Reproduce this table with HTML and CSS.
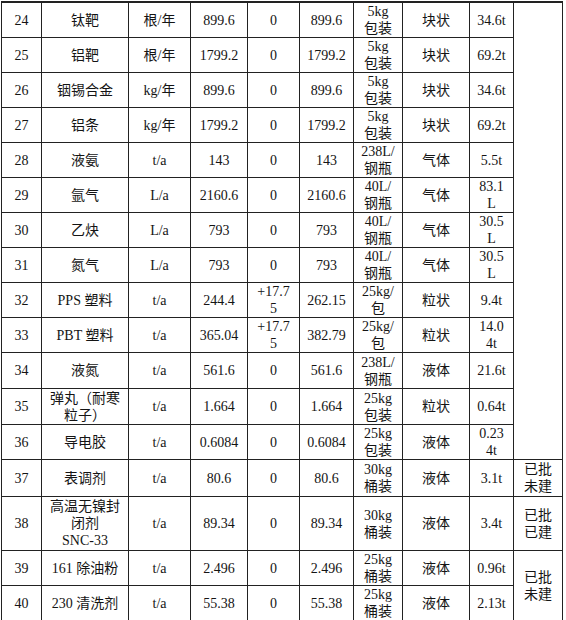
FILE: index.html
```html
<!DOCTYPE html>
<html lang="zh-CN">
<head>
<meta charset="utf-8">
<title>原辅材料表</title>
<link rel="stylesheet" href="styles.css">
</head>
<body>
<table class="mat">
  <colgroup>
    <col class="c-no"><col class="c-name"><col class="c-unit"><col class="c-v1"><col class="c-chg"><col class="c-v2"><col class="c-pack"><col class="c-form"><col class="c-max"><col class="c-note">
  </colgroup>
  <tbody>
    <tr class="h35"><td>24</td><td>钛靶</td><td>根/年</td><td>899.6</td><td>0</td><td>899.6</td><td>5kg<br>包装</td><td>块状</td><td>34.6t</td><td rowspan="13"></td></tr>
    <tr class="h35"><td>25</td><td>铝靶</td><td>根/年</td><td>1799.2</td><td>0</td><td>1799.2</td><td>5kg<br>包装</td><td>块状</td><td>69.2t</td></tr>
    <tr class="h35"><td>26</td><td>铟锡合金</td><td>kg/年</td><td>899.6</td><td>0</td><td>899.6</td><td>5kg<br>包装</td><td>块状</td><td>34.6t</td></tr>
    <tr class="h35"><td>27</td><td>铝条</td><td>kg/年</td><td>1799.2</td><td>0</td><td>1799.2</td><td>5kg<br>包装</td><td>块状</td><td>69.2t</td></tr>
    <tr class="h35"><td>28</td><td>液氨</td><td>t/a</td><td>143</td><td>0</td><td>143</td><td>238L/<br>钢瓶</td><td>气体</td><td>5.5t</td></tr>
    <tr class="h35"><td>29</td><td>氩气</td><td>L/a</td><td>2160.6</td><td>0</td><td>2160.6</td><td>40L/<br>钢瓶</td><td>气体</td><td>83.1<br>L</td></tr>
    <tr class="h35"><td>30</td><td>乙炔</td><td>L/a</td><td>793</td><td>0</td><td>793</td><td>40L/<br>钢瓶</td><td>气体</td><td>30.5<br>L</td></tr>
    <tr class="h35"><td>31</td><td>氮气</td><td>L/a</td><td>793</td><td>0</td><td>793</td><td>40L/<br>钢瓶</td><td>气体</td><td>30.5<br>L</td></tr>
    <tr class="h34"><td>32</td><td>PPS 塑料</td><td>t/a</td><td>244.4</td><td>+17.7<br>5</td><td>262.15</td><td>25kg/<br>包</td><td>粒状</td><td>9.4t</td></tr>
    <tr class="h35"><td>33</td><td>PBT 塑料</td><td>t/a</td><td>365.04</td><td>+17.7<br>5</td><td>382.79</td><td>25kg/<br>包</td><td>粒状</td><td>14.0<br>4t</td></tr>
    <tr class="h36"><td>34</td><td>液氮</td><td>t/a</td><td>561.6</td><td>0</td><td>561.6</td><td>238L/<br>钢瓶</td><td>液体</td><td>21.6t</td></tr>
    <tr class="h36"><td>35</td><td>弹丸（耐寒<br>粒子）</td><td>t/a</td><td>1.664</td><td>0</td><td>1.664</td><td>25kg<br>包装</td><td>粒状</td><td>0.64t</td></tr>
    <tr class="h34"><td>36</td><td>导电胶</td><td>t/a</td><td>0.6084</td><td>0</td><td>0.6084</td><td>25kg<br>包装</td><td>液体</td><td>0.23<br>4t</td></tr>
    <tr class="h37"><td>37</td><td>表调剂</td><td>t/a</td><td>80.6</td><td>0</td><td>80.6</td><td>30kg<br>桶装</td><td>液体</td><td>3.1t</td><td>已批<br>未建</td></tr>
    <tr class="h54"><td>38</td><td>高温无镍封<br>闭剂<br>SNC-33</td><td>t/a</td><td>89.34</td><td>0</td><td>89.34</td><td>30kg<br>桶装</td><td>液体</td><td>3.4t</td><td>已批<br>已建</td></tr>
    <tr class="h35"><td>39</td><td>161 除油粉</td><td>t/a</td><td>2.496</td><td>0</td><td>2.496</td><td>25kg<br>桶装</td><td>液体</td><td>0.96t</td><td rowspan="2">已批<br>未建</td></tr>
    <tr class="h35"><td>40</td><td>230 清洗剂</td><td>t/a</td><td>55.38</td><td>0</td><td>55.38</td><td>25kg<br>桶装</td><td>液体</td><td>2.13t</td></tr>
    <tr class="h35"><td></td><td></td><td></td><td></td><td></td><td></td><td></td><td></td><td></td><td></td></tr>
  </tbody>
</table>
</body>
</html>
```

FILE: styles.css
```css
html, body {
  margin: 0;
  padding: 0;
  background: #fff;
}

body {
  font-family: "Liberation Serif", "Noto Sans CJK SC", serif;
  font-size: 14px;
  color: #141414;
}

.mat {
  border-collapse: collapse;
  table-layout: fixed;
  width: 561px;
  margin: 1px 0 0 1px;
  border-top: 2px solid #222;
}

.mat td {
  border: 1px solid #222;
  padding: 0;
  text-align: center;
  vertical-align: middle;
  line-height: 17px;
  white-space: nowrap;
  overflow: hidden;
}

.c-no { width: 40px; }
.c-name { width: 87px; }
.c-unit { width: 62px; }
.c-v1 { width: 57px; }
.c-chg { width: 52px; }
.c-v2 { width: 54px; }
.c-pack { width: 49px; }
.c-form { width: 67px; }
.c-max { width: 44px; }
.c-note { width: 49px; }

.h34 { height: 34px; }
.h35 { height: 35px; }
.h36 { height: 36px; }
.h37 { height: 37px; }
.h54 { height: 54px; }
```
